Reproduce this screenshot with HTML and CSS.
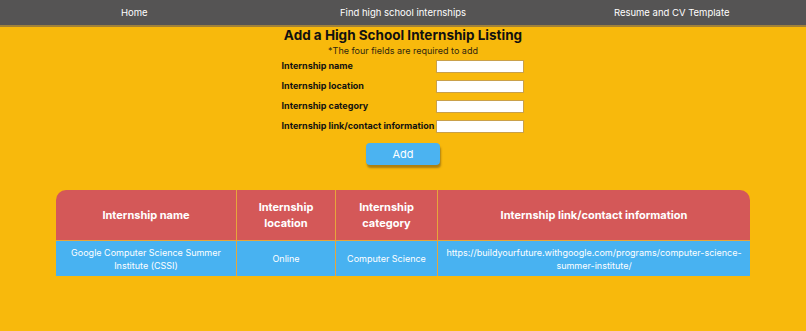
FILE: index.html
```html
<!DOCTYPE html>
<html lang="en">
<head>
  <meta charset="UTF-8" />
  <title>High School Internships</title>
  <link rel="stylesheet" href="styles.css">
</head>
<body>

  <div class="nav">
    <a href="#">Home</a>
    <a href="#">Find high school internships</a>
    <a href="#">Resume and CV Template</a>
  </div>

  <div class="add">
    <h1>Add a High School Internship Listing</h1>
    <p class="note">*The four fields are required to add</p>

    <div class="form">
      <label>Internship name</label>
      <input type="text">
      <label>Internship location</label>
      <input type="text">
      <label>Internship category</label>
      <input type="text">
      <label>Internship link/contact information</label>
      <input type="text">
    </div>

    <button class="btn">Add</button>
  </div>

  <table class="list">
    <tr>
      <th class="c1">Internship name</th>
      <th class="c2">Internship location</th>
      <th class="c3">Internship category</th>
      <th class="c4">Internship link/contact information</th>
    </tr>
    <tr>
      <td>Google Computer Science Summer Institute (CSSI)</td>
      <td>Online</td>
      <td>Computer Science</td>
      <td>https://buildyourfuture.withgoogle.com/programs/computer-science-summer-institute/</td>
    </tr>
  </table>

</body>
</html>
```

FILE: styles.css
```css
body {
  margin: 0;
  font-family: Inter, "Noto Sans", sans-serif;
  background-color: #f8b90c;
  color: #111;
}

.nav {
  display: flex;
  background: #555454;
  height: 25px;
  border-bottom: 2px solid #a0813a;
}

.nav a {
  flex: 1;
  text-align: center;
  line-height: 25px;
  color: #fff;
  font-size: 9.5px;
  text-decoration: none;
}

.add {
  display: flex;
  flex-direction: column;
  align-items: center;
}

.add h1 {
  margin: 0;
  font-size: 13.5px;
  font-weight: 700;
}

.note {
  margin: 2px 0 4px;
  font-size: 9px;
  color: #2e2610;
}

.form {
  display: grid;
  grid-template-columns: auto 88px;
  column-gap: 2px;
  row-gap: 7px;
}

.form label {
  font-size: 9px;
  font-weight: 700;
  line-height: 12px;
}

.form input {
  padding: 0;
  border: 1px solid #c9a04a;
  box-sizing: border-box;
  height: 13px;
}

.btn {
  margin-top: 10px;
  width: 74px;
  height: 22px;
  border: none;
  border-radius: 4px;
  background: #4bb3f1;
  color: #fff;
  font-family: inherit;
  font-size: 11px;
  box-shadow: 1px 3px 2px rgba(110, 80, 20, 0.55);
}

.list {
  margin: 25px 0 0 56px;
  width: 694px;
  table-layout: fixed;
  border-collapse: collapse;
  color: #fff;
  text-align: center;
}

.list th {
  background: #d45858;
  height: 50px;
  padding: 0 4px;
  font-size: 11px;
  font-weight: 700;
  border-left: 1px solid #e7a63a;
  line-height: 16px;
}

.list th:first-child {
  border-left: none;
  border-top-left-radius: 10px;
}

.list th:last-child {
  border-top-right-radius: 10px;
}

.list td {
  background: #48b2f1;
  height: 35px;
  font-size: 9px;
  line-height: 13px;
  padding: 0 4px;
  border-left: 1px solid #e7a63a;
  border-top: 1px solid #e7a63a;
}

.list td:first-child {
  border-left: none;
}

.c1 { width: 172px; }
.c2 { width: 90px; }
.c3 { width: 93px; }
```
